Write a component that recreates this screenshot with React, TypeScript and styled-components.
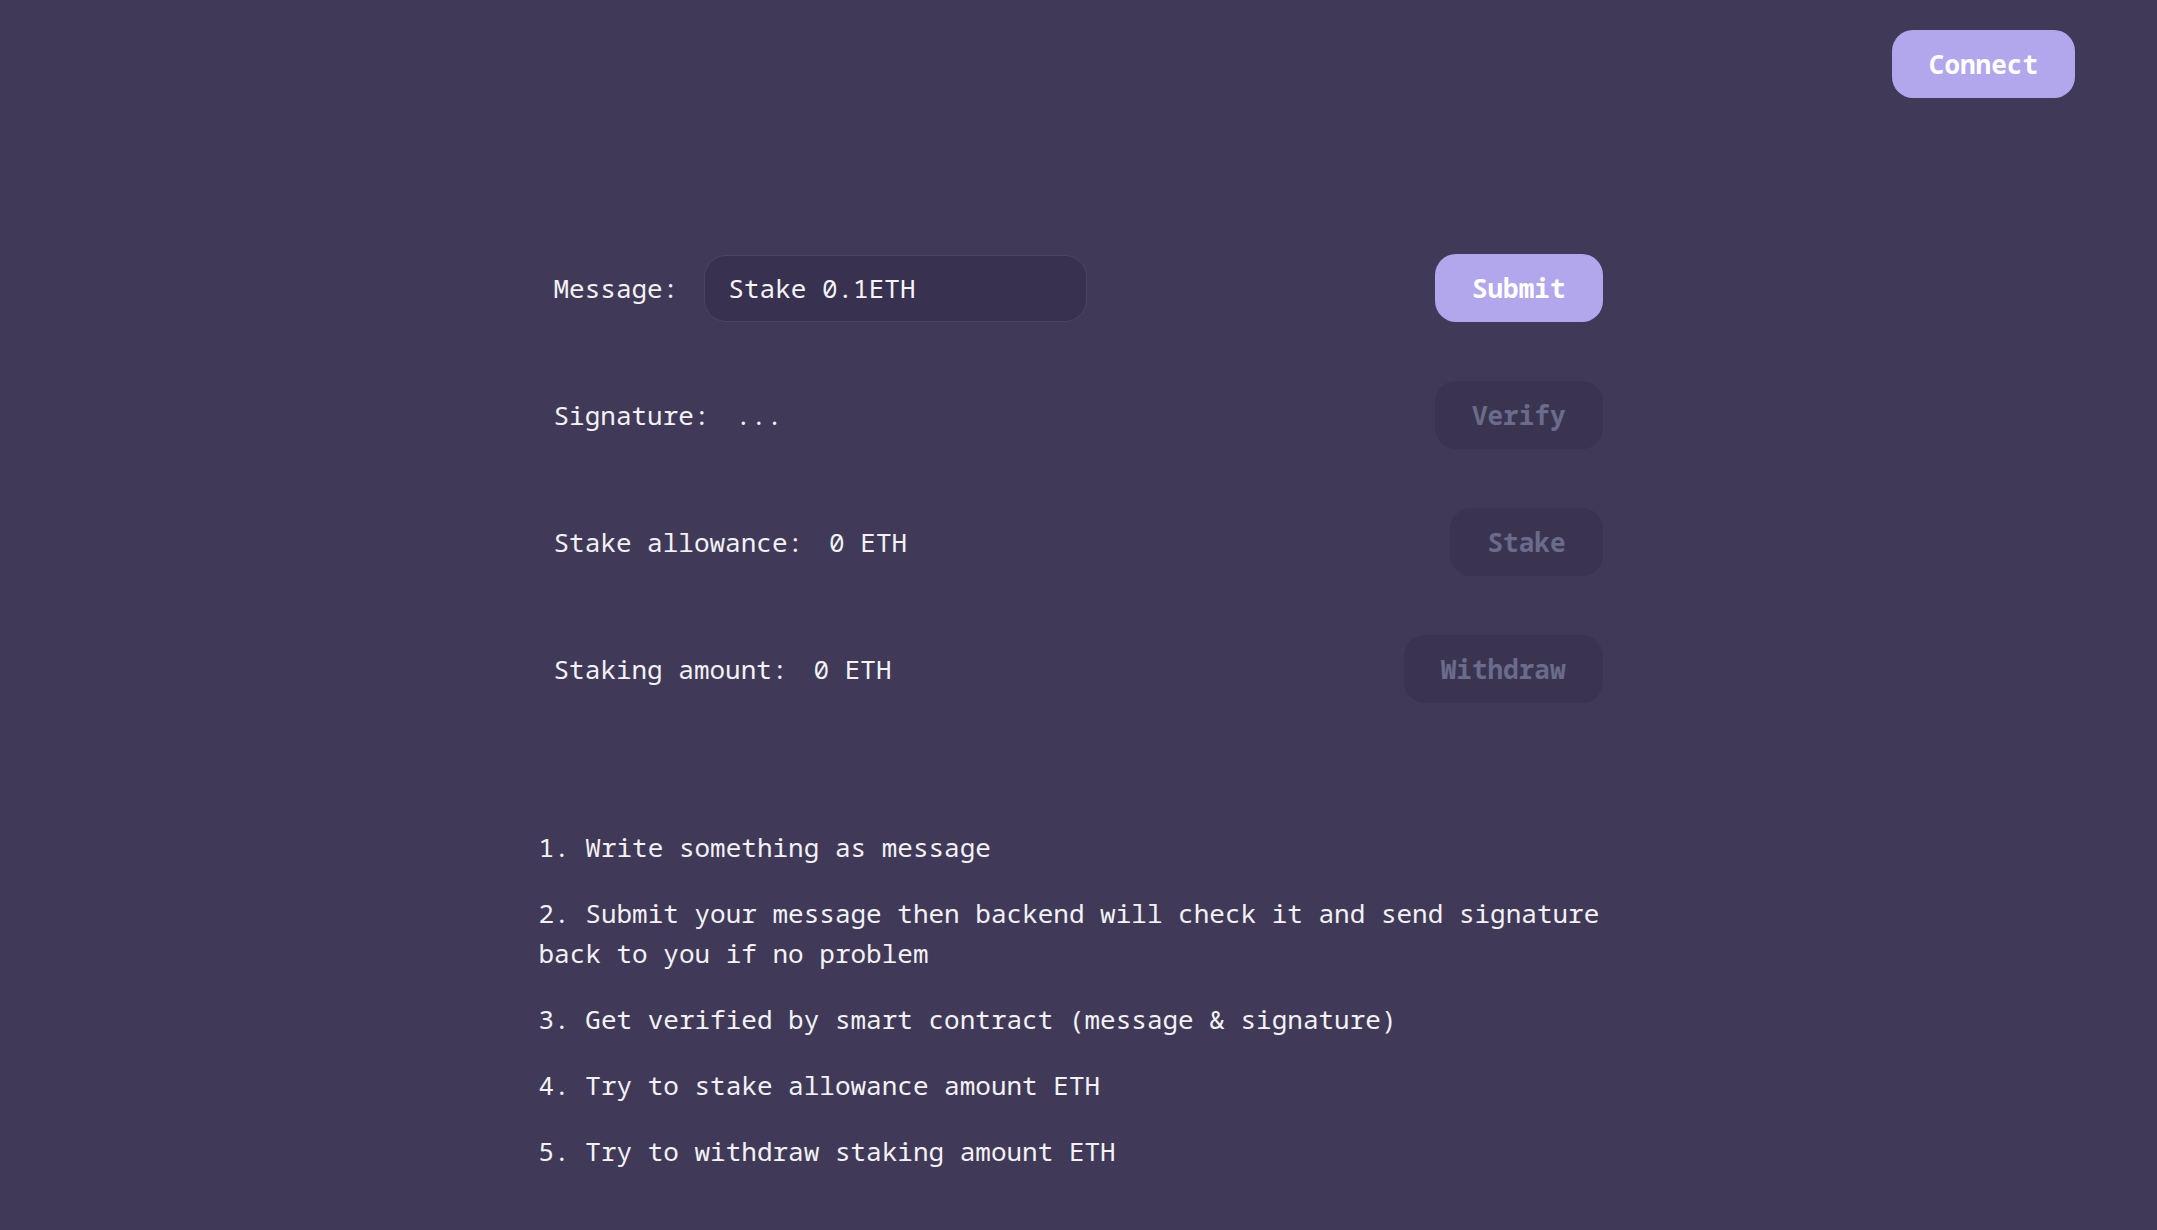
import React, { useState } from "react";
import styled, { createGlobalStyle } from "styled-components";

const GlobalStyle = createGlobalStyle`
  html, body {
    margin: 0;
    padding: 0;
    background: #403a58;
  }
  * { box-sizing: border-box; }
`;

const Page = styled.div`
  min-height: 100vh;
  background: #403a58;
  color: #f2f2f5;
  font-family: "Noto Sans Mono", "DejaVu Sans Mono", "Liberation Mono", monospace;
  font-size: 26px;
`;

const Header = styled.header`
  display: flex;
  justify-content: flex-end;
  padding: 30px 82px 0 0;
`;

const Button = styled.button<{ $disabled?: boolean }>`
  height: 68px;
  padding: 0 37px;
  border: none;
  border-radius: 21px;
  font-family: inherit;
  font-size: 26px;
  font-weight: bold;
  line-height: 1;
  cursor: ${(p) => (p.$disabled ? "default" : "pointer")};
  background: ${(p) => (p.$disabled ? "#3a3450" : "#b2a7ec")};
  color: ${(p) => (p.$disabled ? "#6a6c8b" : "#ffffff")};
`;

const Main = styled.main`
  width: 1080px;
  margin: 0 auto;
  padding-top: 156px;
`;

const Rows = styled.div`
  display: flex;
  flex-direction: column;
  gap: 59px;
  padding: 0 16px 0 15px;
`;

const Row = styled.div`
  display: flex;
  align-items: center;
  justify-content: space-between;
  height: 68px;
`;

const Field = styled.div`
  display: flex;
  align-items: center;
  gap: 26px;
  white-space: pre;
`;

const Label = styled.span`
  color: #f2f2f5;
`;

const Value = styled.span`
  color: #f2f2f5;
`;

const Input = styled.input`
  width: 383px;
  height: 67px;
  padding: 0 23px;
  border-radius: 22px;
  border: 1px solid #4b4565;
  background: #38314f;
  color: #f4f4f7;
  font-family: inherit;
  font-size: 26px;
  outline: none;
`;

const Steps = styled.div`
  margin-top: 124px;
  padding-bottom: 20px;
`;

const Step = styled.p`
  margin: 26px 0;
  line-height: 40px;
  color: #f2f2f5;
`;

export default function App() {
  const [message, setMessage] = useState("Stake 0.1ETH");
  return (
    <>
      <GlobalStyle />
      <Page>
        <Header>
          <Button>Connect</Button>
        </Header>
        <Main>
          <Rows>
            <Row>
              <Field>
                <Label>Message:</Label>
                <Input value={message} onChange={(e) => setMessage(e.target.value)} />
              </Field>
              <Button>Submit</Button>
            </Row>
            <Row>
              <Field>
                <Label>Signature:</Label>
                <Value>...</Value>
              </Field>
              <Button $disabled>Verify</Button>
            </Row>
            <Row>
              <Field>
                <Label>Stake allowance:</Label>
                <Value>0 ETH</Value>
              </Field>
              <Button $disabled>Stake</Button>
            </Row>
            <Row>
              <Field>
                <Label>Staking amount:</Label>
                <Value>0 ETH</Value>
              </Field>
              <Button $disabled>Withdraw</Button>
            </Row>
          </Rows>
          <Steps>
            <Step>1. Write something as message</Step>
            <Step>
              2. Submit your message then backend will check it and send signature back to you if no problem
            </Step>
            <Step>3. Get verified by smart contract (message &amp; signature)</Step>
            <Step>4. Try to stake allowance amount ETH</Step>
            <Step>5. Try to withdraw staking amount ETH</Step>
          </Steps>
        </Main>
      </Page>
    </>
  );
}
